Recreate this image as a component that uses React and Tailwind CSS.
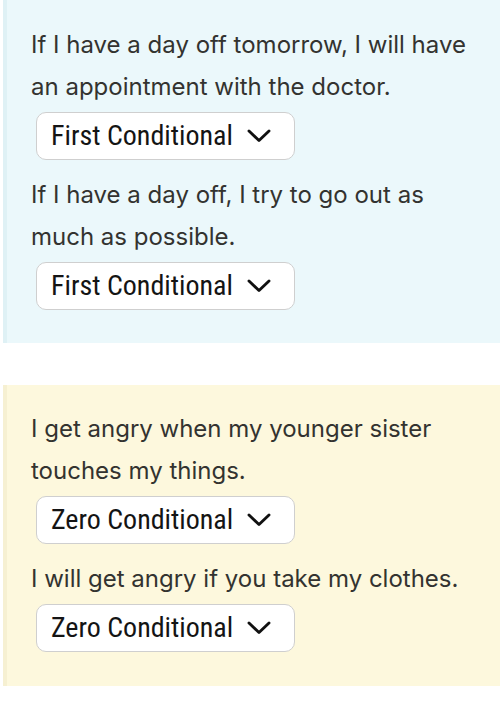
import React from 'react';

const groups = [
    {
        tone: 'bg-[#ebf8fb] border-[#dff1f5]',
        items: [
            { text: 'If I have a day off tomorrow, I will have an appointment with the doctor.', answer: 'First Conditional' },
            { text: 'If I have a day off, I try to go out as much as possible.', answer: 'First Conditional' },
        ],
    },
    {
        tone: 'bg-[#fdf8dd] border-[#f6f0d2]',
        items: [
            { text: 'I get angry when my younger sister touches my things.', answer: 'Zero Conditional' },
            { text: 'I will get angry if you take my clothes.', answer: 'Zero Conditional' },
        ],
    },
];

const Chevron = () => (
    <svg width="24" height="14" viewBox="0 0 24 14" fill="none" className="shrink-0">
        <polyline points="2,2 12,11.5 22,2" stroke="#111" strokeWidth="2.9" strokeLinecap="round" strokeLinejoin="round" />
    </svg>
);

const AnswerSelect = ({ value }) => (
    <button
        type="button"
        className="ml-[5px] flex h-[48px] w-[259px] items-center gap-[14px] rounded-[10px] border border-[#cfcfcf] bg-white pl-[14px] text-[28px] text-[#141414] [font-family:'Roboto_Condensed','Liberation_Sans_Narrow','Roboto',sans-serif]"
    >
        <span>{value}</span>
        <Chevron />
    </button>
);

const App = () => {
    return (
        <div className="min-h-[721px] bg-white pl-[3px] [font-family:Inter,Roboto,sans-serif]">
            {groups.map((group, gi) => (
                <section
                    key={gi}
                    className={`border-l-4 pl-[24px] pr-[16px] ${group.tone} ${gi === 0 ? 'pt-[24px] pb-[33px]' : 'mt-[42px] pt-[23px] pb-[34px]'}`}
                >
                    <div className="flex flex-col gap-[14px]">
                        {group.items.map((item, ii) => (
                            <div key={ii} className="flex flex-col gap-[4px]">
                                <p className="text-[24px] leading-[42px] text-[#333330]">{item.text}</p>
                                <AnswerSelect value={item.answer} />
                            </div>
                        ))}
                    </div>
                </section>
            ))}
        </div>
    );
};

export default App;
